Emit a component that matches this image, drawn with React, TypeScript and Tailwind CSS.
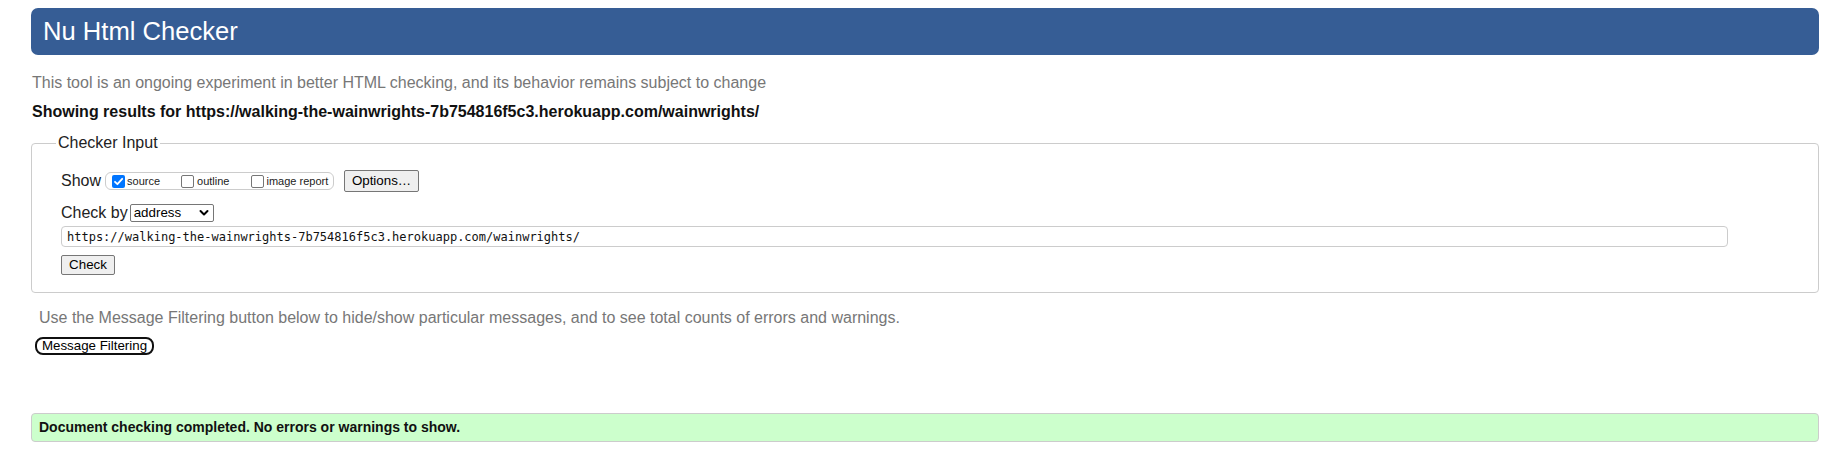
import React from "react";

function Box({ checked }: { checked?: boolean }) {
  if (checked) {
    return (
      <span className="inline-flex h-[13px] w-[13px] items-center justify-center rounded-[2px] bg-[#0075ff]">
        <svg width="11" height="11" viewBox="0 0 11 11" fill="none">
          <path d="M2 5.8 L4.4 8.2 L9.2 2.8" stroke="white" strokeWidth="1.8" strokeLinecap="round" strokeLinejoin="round" />
        </svg>
      </span>
    );
  }
  return <span className="inline-block h-[13px] w-[13px] rounded-[2px] border border-[#767676] bg-white" />;
}

export default function App() {
  return (
    <div className="w-[1842px] h-[456px] bg-white pl-[31px] pr-[23px] pt-[8px] font-['Liberation_Sans',Arial,sans-serif] text-[#222]">
      <h1 className="flex h-[47px] items-center rounded-[7px] bg-[#365d95] pl-[12px] text-[25.6px] font-normal text-white">
        Nu Html Checker
      </h1>
      <p className="mt-[19px] text-[16px] leading-[18px] text-[#777] pl-[1px]">
        This tool is an ongoing experiment in better HTML checking, and its behavior remains subject to change
      </p>
      <p className="mt-[11px] text-[16px] font-bold leading-[18px] text-[#111] pl-[1px]">
        Showing results for https://walking-the-wainwrights-7b754816f5c3.herokuapp.com/wainwrights/
      </p>
      <fieldset className="mt-[13px] rounded-[4px] border border-[#cccccc] pl-[29px] pt-[18px] pb-[17px]">
        <legend className="ml-[-5px] px-[2px] text-[16px] leading-[18px] text-[#222]">Checker Input</legend>
        <div className="flex h-[22px] items-center">
          <span className="text-[16px] leading-[18px]">Show</span>
          <div className="ml-[4px] flex h-[18px] w-[229px] items-center rounded-[6px] border border-[#cccccc] pl-[6px] text-[11px] text-[#222]">
            <Box checked />
            <span className="ml-[2px]">source</span>
            <span className="ml-[21px] flex items-center">
              <Box />
              <span className="ml-[3px]">outline</span>
            </span>
            <span className="ml-[22px] flex items-center">
              <Box />
              <span className="ml-[2px]">image report</span>
            </span>
          </div>
          <div className="ml-[10px] flex h-[22px] w-[75px] items-center justify-center rounded-[2px] border border-[#767676] bg-[#efefef] text-[13.33px] text-black">
            Options…
          </div>
        </div>
        <div className="mt-[10px] flex h-[22px] items-center">
          <span className="text-[16px] leading-[18px]">Check by</span>
          <div className="ml-[2px] flex h-[18px] w-[84px] items-center justify-between rounded-[2px] border border-[#767676] bg-white pl-[3px] pr-[4px] text-[13.33px] text-black">
            <span>address</span>
            <svg width="10" height="8" viewBox="0 0 10 8" fill="none">
              <path d="M1.5 2 L5 5.5 L8.5 2" stroke="black" strokeWidth="2" strokeLinecap="round" strokeLinejoin="round" />
            </svg>
          </div>
        </div>
        <div className="mt-[2px] flex h-[21px] w-[1667px] items-center rounded-[4px] border border-[#cccccc] pl-[5px] font-['DejaVu_Sans_Mono',monospace] text-[12px] text-[#111]">
          https://walking-the-wainwrights-7b754816f5c3.herokuapp.com/wainwrights/
        </div>
        <div className="mt-[8px] flex h-[20px] w-[54px] items-center justify-center rounded-[2px] border border-[#767676] bg-[#efefef] text-[13.33px] text-black">
          Check
        </div>
      </fieldset>
      <p className="mt-[16px] pl-[8px] text-[16px] leading-[18px] text-[#777]">
        Use the Message Filtering button below to hide/show particular messages, and to see total counts of errors and warnings.
      </p>
      <div className="ml-[4px] mt-[10px] flex h-[18px] w-[119px] items-center justify-center rounded-[8px] border-2 border-[#101010] bg-white text-[13.33px] text-black">
        Message Filtering
      </div>
      <div className="mt-[58px] flex h-[29px] items-center rounded-[4px] border border-[#cccccc] bg-[#ccffcc] pl-[7px] text-[14px] font-bold text-[#111]">
        Document checking completed. No errors or warnings to show.
      </div>
    </div>
  );
}
